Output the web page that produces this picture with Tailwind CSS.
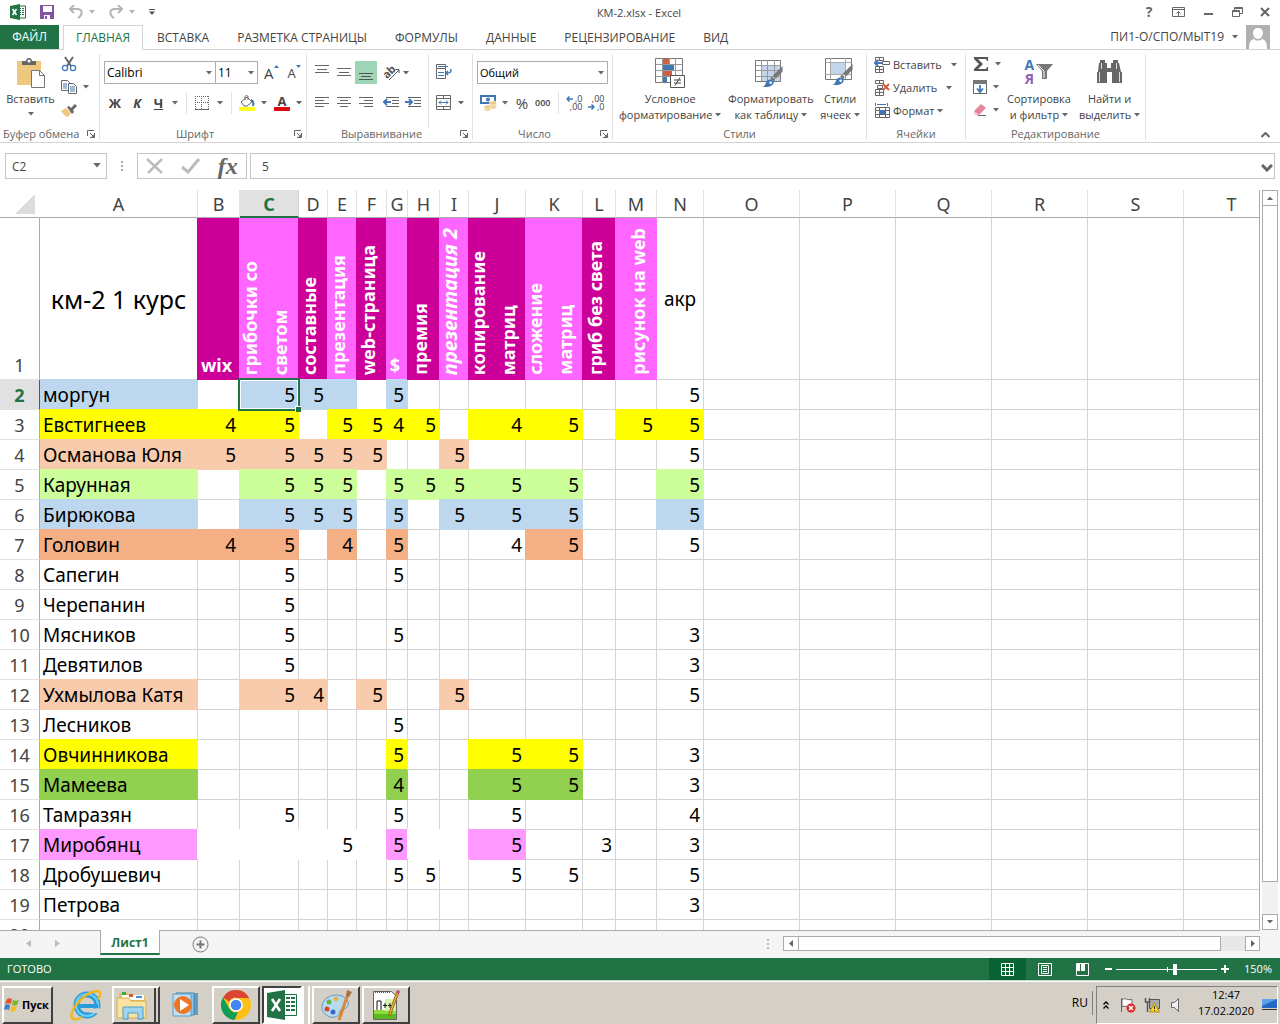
<!DOCTYPE html>
<html lang="ru">
<head>
  <meta charset="UTF-8" />
  <meta name="viewport" content="width=device-width, initial-scale=1" />
  <title>КМ-2.xlsx - Excel</title>
  <script src="https://cdn.jsdelivr.net/npm/@tailwindcss/browser@4"></script>
</head>

<body class="flex h-screen flex-col overflow-hidden bg-white font-['Open_Sans','Noto_Sans',sans-serif] text-[12px] leading-4 text-[#444]">

  <!-- Shared icons -->
  <svg class="hidden">
    <symbol id="caret" viewBox="0 0 6 4"><path d="M0 0h6L3 3.5z" fill="#666" /></symbol>
    <symbol id="launcher" viewBox="0 0 8 8"><path d="M.5 6V.5H7M3 3l3 3M7.5 3v4.5H3" fill="none" stroke="#666" /><path d="M7.5 4v3.5H4z" fill="#666" /></symbol>
    <symbol id="brush" viewBox="0 0 24 24">
      <path d="M22 1v6l-7 7-3-3z" fill="#777" />
      <path d="M11 12l3 3-2 2-3-3z" fill="#777" />
      <path d="M1 23c4-1 3-8 8-8 4 0 5 4 2 6-2 2-6 2-10 2z" fill="#3f78b5" />
      <path d="M8 18c1-1 3-1 3 1l-2 1z" fill="#fff" />
    </symbol>
  </svg>

  <!-- Title bar -->
  <header class="flex h-[25px] shrink-0 items-center px-2 pb-[2px]">
    <div class="flex flex-1 items-center">
      <svg class="ml-[2px] h-4 w-4" viewBox="0 0 16 16"><path d="M8 2h7.500v12H8z" fill="#fff" stroke="#217346" /><path d="M9 4h2v1H9zm3 0h2v1h-2zM9 6h2v1H9zm3 0h2v1h-2zM9 8h2v1H9zm3 0h2v1h-2zM9 10h2v1H9zm3 0h2v1h-2z" fill="#217346" /><path d="M0 2l10-2v16L0 14z" fill="#217346" /><path d="M2.500 5l4 6M6.500 5l-4 6" stroke="#fff" stroke-width="1.600" /></svg>
      <button class="ml-[14px]" aria-label="Сохранить"><svg class="h-[14px] w-[14px]" viewBox="0 0 14 14"><path d="M0 0h14v14H0z" fill="#8053a5" /><path d="M3 1h9v6H3z" fill="#fff" /><path d="M4 10h6v4H4z" fill="#fff" /><path d="M5 11h2v3H5z" fill="#8053a5" /></svg></button>
      <button class="ml-[15px] flex items-center gap-[6px]" aria-label="Отменить"><svg class="h-[14px] w-[14px]" viewBox="0 0 14 14" fill="none" stroke="#b5b5b5" stroke-width="2"><path d="M5 0L1 4l4 4M1 4h7c6 0 6 6 1 9" /></svg><svg class="h-1 w-[6px] opacity-50"><use href="#caret" /></svg></button>
      <button class="ml-[14px] flex items-center gap-[6px]" aria-label="Вернуть"><svg class="h-[14px] w-[14px]" viewBox="0 0 14 14" fill="none" stroke="#b5b5b5" stroke-width="2"><path d="M9 0l4 4-4 4M13 4H6C0 4 0 10 5 13" /></svg><svg class="h-1 w-[6px] opacity-50"><use href="#caret" /></svg></button>
      <button class="ml-[14px]" aria-label="Настройка панели"><svg class="h-[6px] w-[6px]" viewBox="0 0 6 6"><path d="M0 0h6v1H0zM0 2.500h6L3 6z" fill="#555" /></svg></button>
    </div>
    <h1 class="mt-[2px] text-[11px]">КМ-2.xlsx - Excel</h1>
    <div class="flex flex-1 items-center justify-end gap-[17px] pr-[2px] text-[#666]">
      <button class="w-3 text-[14px] font-bold" aria-label="Справка">?</button>
      <button aria-label="Параметры отображения ленты"><svg class="h-[10px] w-[13px]" viewBox="0 0 13 10" fill="none" stroke="#666"><path d="M.5.5h12v9H.5zM1 2.500h11M6.500 9V4.500M4.500 6.500l2-2 2 2" /></svg></button>
      <button aria-label="Свернуть"><svg class="h-[10px] w-[13px]" viewBox="0 0 13 10"><path d="M2 6h9v2H2z" fill="#666" /></svg></button>
      <button aria-label="Восстановить"><svg class="h-[10px] w-[11px]" viewBox="0 0 11 10" fill="none" stroke="#666"><path d="M.5 3.500h7v6h-7zM.5 4.500h7M2.500 3V.5h8v6H8M3 1.500h7" /></svg></button>
      <button aria-label="Закрыть"><svg class="h-[10px] w-[10px]" viewBox="0 0 10 10"><path d="M1 1l8 8M9 1L1 9" stroke="#666" stroke-width="2" /></svg></button>
    </div>
  </header>

  <!-- Ribbon tabs -->
  <nav class="flex h-[25px] shrink-0 border-b border-[#d4d4d4]">
    <a href="#" class="flex w-[59px] items-center justify-center bg-[#217346] text-white">ФАЙЛ</a>
    <a href="#" class="relative -mb-px ml-1 flex w-20 items-center justify-center border border-b-0 border-[#d4d4d4] bg-white text-[#217346]">ГЛАВНАЯ</a>
    <a href="#" class="flex items-center px-[14px] pt-px">ВСТАВКА</a>
    <a href="#" class="flex items-center px-[14px] pt-px">РАЗМЕТКА СТРАНИЦЫ</a>
    <a href="#" class="flex items-center px-[14px] pt-px">ФОРМУЛЫ</a>
    <a href="#" class="flex items-center px-[14px] pt-px">ДАННЫЕ</a>
    <a href="#" class="flex items-center px-[14px] pt-px">РЕЦЕНЗИРОВАНИЕ</a>
    <a href="#" class="flex items-center px-[14px] pt-px">ВИД</a>
    <button class="mr-[10px] ml-auto flex items-center gap-2">ПИ1-О/СПО/МЫТ19
      <svg class="h-1 w-[6px]"><use href="#caret" /></svg>
      <svg class="h-6 w-6" viewBox="0 0 24 24"><path d="M0 0h24v24H0z" fill="#b1b1b1" /><path d="M12 3c3 0 5 2 5 5s-2 6-5 6-5-3-5-6 2-5 5-5zM3 24c0-6 1-9 5-10 2 2 6 2 8 0 4 1 5 4 5 10z" fill="#fff" /></svg>
    </button>
  </nav>

  <!-- Ribbon -->
  <section class="flex h-[93px] shrink-0 border-b border-[#d4d4d4] pt-1 pb-[2px] text-[11px]">

    <div class="flex w-[100px] flex-col border-r border-[#e1e1e1]">
      <div class="flex h-[74px] shrink-0">
        <button class="flex w-[61px] flex-col items-center pt-1">
          <svg class="h-[30px] w-7" viewBox="0 0 28 30"><path d="M0 3h24v24H0z" fill="#edc87e" /><path d="M5 7V3h4c0-4 6-4 6 0h4v4z" fill="#666" /><circle cx="12" cy="3" r="1.500" fill="#fff" /><path d="M14.500 12.500h8l5 5v12h-13z" fill="#fff" stroke="#777" /><path d="M22.500 12.500v5h5" fill="none" stroke="#777" /></svg>
          <span class="mt-[3px]">Вставить</span>
          <svg class="mt-[5px] h-1 w-[6px]"><use href="#caret" /></svg>
        </button>
        <div class="flex flex-col gap-[7px] pt-[2px]">
          <button aria-label="Вырезать"><svg class="h-4 w-4" viewBox="0 0 16 16" fill="none"><path d="M4 1l6 9M12 1L6 10" stroke="#666" stroke-width="2" /><circle cx="4" cy="12" r="2.600" stroke="#3f78b5" stroke-width="1.300" /><circle cx="12" cy="12" r="2.600" stroke="#3f78b5" stroke-width="1.300" /></svg></button>
          <button class="flex items-center gap-[6px]" aria-label="Копировать"><svg class="h-4 w-4" viewBox="0 0 16 16" fill="#fff" stroke="#666"><path d="M.5 1.500h6l2 2v8h-8z" /><path d="M2 5h4M2 7h4M2 9h4" stroke="#3f78b5" /><path d="M7.500 4.500h5l3 3v7h-8z" /><path d="M9 8h5M9 10h5M9 12h5" stroke="#3f78b5" /></svg><svg class="h-1 w-[6px]"><use href="#caret" /></svg></button>
          <button aria-label="Формат по образцу"><svg class="h-4 w-4" viewBox="0 0 16 16"><path d="M0 9l5-3 5 5-3 4-3-1z" fill="#edc87e" /><path d="M6 5l2-1 2 2 4-4 2 2-4 4 1 2-2 2z" fill="#666" /></svg></button>
        </div>
      </div>
      <div class="flex items-center justify-between pr-1 pl-[3px] leading-3 text-[#666]">Буфер обмена<svg class="h-2 w-2"><use href="#launcher" /></svg></div>
    </div>

    <div class="flex w-[207px] flex-col border-r border-[#e1e1e1]">
      <div class="flex h-[74px] shrink-0 flex-col pl-1">
        <div class="flex items-center pt-[7px]">
          <div class="relative">
            <select aria-label="Шрифт" class="block h-[23px] w-[112px] appearance-none border border-[#ababab] bg-white px-[2px] text-[12px] text-black"><option>Calibri</option></select>
            <svg class="pointer-events-none absolute top-[10px] right-1 h-1 w-[6px]"><use href="#caret" /></svg>
          </div>
          <div class="relative -ml-px">
            <select aria-label="Размер шрифта" class="block h-[23px] w-[43px] appearance-none border border-[#ababab] bg-white px-[2px] text-[12px] text-black"><option>11</option></select>
            <svg class="pointer-events-none absolute top-[10px] right-1 h-1 w-[6px]"><use href="#caret" /></svg>
          </div>
          <button class="ml-[6px] flex items-start text-[15px]" aria-label="Увеличить размер шрифта">A<svg class="h-[3px] w-[5px]" viewBox="0 0 5 3"><path d="M0 3h5L2.500 0z" fill="#3f78b5" /></svg></button>
          <button class="ml-[9px] flex items-start text-[13px]" aria-label="Уменьшить размер шрифта">A<svg class="h-[3px] w-[5px]" viewBox="0 0 5 3"><path d="M0 0h5L2.500 3z" fill="#3f78b5" /></svg></button>
        </div>
        <div class="mt-2 flex items-center pl-1 text-[13px] font-bold">
          <button class="w-[14px]">Ж</button>
          <button class="ml-[9px] w-3 italic">К</button>
          <button class="ml-[10px] w-[11px] underline">Ч</button>
          <svg class="ml-[8px] h-1 w-[6px]"><use href="#caret" /></svg>
          <span class="ml-2 h-[22px] border-l border-[#e1e1e1]"></span>
          <button class="ml-2 flex items-center gap-2" aria-label="Границы"><svg class="h-[14px] w-[14px]" viewBox="0 0 14 14" fill="none" stroke="#666"><path d="M0 .5h14M0 6.500h14M.5 0v13M6.500 0v13M13.500 0v13" stroke-dasharray="1 1" /><path d="M0 13.500h14" /></svg><svg class="h-1 w-[6px]"><use href="#caret" /></svg></button>
          <span class="ml-2 h-[22px] border-l border-[#e1e1e1]"></span>
          <button class="ml-[7px] flex items-center gap-[6px]" aria-label="Цвет заливки"><svg class="h-4 w-4" viewBox="0 0 16 16"><path d="M2 7l6-5 5 5-5 4-3 0z" fill="#fff" stroke="#666" /><path d="M6 5V2c0-2 3-2 3 0v3" fill="none" stroke="#666" /><path d="M12 4c3 1 4 4 3 7h-2c1-3 0-4-1-5z" fill="#3f78b5" /><path d="M0 12h16v4H0z" fill="#ff2" /></svg><svg class="h-1 w-[6px]"><use href="#caret" /></svg></button>
          <button class="ml-[7px] flex items-center gap-[6px]" aria-label="Цвет текста"><span class="w-4 border-b-4 border-[#e00b12] text-center leading-3">А</span><svg class="h-1 w-[6px]"><use href="#caret" /></svg></button>
        </div>
      </div>
      <div class="flex items-center pr-1 leading-3 text-[#666]"><span class="flex-1 pr-1 text-center">Шрифт</span><svg class="h-2 w-2"><use href="#launcher" /></svg></div>
    </div>

    <div class="flex w-[166px] flex-col border-r border-[#e1e1e1]">
      <div class="flex h-[74px] shrink-0 justify-between pr-2 pl-1">
        <div class="flex flex-col gap-2 pt-[7px]">
          <div class="flex items-center">
            <button class="p-1" aria-label="По верхнему краю"><svg class="h-[15px] w-[14px]" viewBox="0 0 14 15" stroke="#666"><path d="M0 .5h14M2 4.500h10M0 7.500h14" /></svg></button>
            <button class="p-1" aria-label="По середине"><svg class="h-[15px] w-[14px]" viewBox="0 0 14 15" stroke="#666"><path d="M0 3.500h14M2 7.500h10M0 10.500h14" /></svg></button>
            <button class="bg-[#9fd5b7] p-1" aria-label="По нижнему краю"><svg class="h-[15px] w-[14px]" viewBox="0 0 14 15" stroke="#555"><path d="M0 8.500h14M2 11.500h10M0 14.500h14" /></svg></button>
            <button class="flex items-center gap-1 pl-[6px]" aria-label="Ориентация"><svg class="h-4 w-4 overflow-visible" viewBox="0 0 16 16"><text x="0" y="11" transform="rotate(-45 6 8)" font-size="11" font-weight="bold" fill="#555">ab</text><path d="M6 15L16 5M12.500 4.500h3.500v3.500" fill="none" stroke="#555" /></svg><svg class="h-1 w-[6px]"><use href="#caret" /></svg></button>
          </div>
          <div class="flex items-center">
            <button class="p-1" aria-label="По левому краю"><svg class="h-[12px] w-[14px]" viewBox="0 0 14 12" stroke="#666"><path d="M0 1.500h14M0 4.500h9M0 7.500h14M0 10.500h9" /></svg></button>
            <button class="p-1" aria-label="По центру"><svg class="h-[12px] w-[14px]" viewBox="0 0 14 12" stroke="#666"><path d="M0 1.500h14M3 4.500h8M0 7.500h14M3 10.500h8" /></svg></button>
            <button class="p-1" aria-label="По правому краю"><svg class="h-[12px] w-[14px]" viewBox="0 0 14 12" stroke="#666"><path d="M0 1.500h14M5 4.500h9M0 7.500h14M5 10.500h9" /></svg></button>
            <button class="pl-[6px]" aria-label="Уменьшить отступ"><svg class="h-[12px] w-4" viewBox="0 0 16 12" stroke="#666"><path d="M3 1.500h13M9 4.500h7M9 7.500h7M3 10.500h13" /><path d="M8 6H1M4 3L1 6l3 3" fill="none" stroke="#3f78b5" stroke-width="2" /></svg></button>
            <button class="pl-[6px]" aria-label="Увеличить отступ"><svg class="h-[12px] w-4" viewBox="0 0 16 12" stroke="#666"><path d="M3 1.500h13M9 4.500h7M9 7.500h7M3 10.500h13" /><path d="M0 6h7M4 3l3 3-3 3" fill="none" stroke="#3f78b5" stroke-width="2" /></svg></button>
          </div>
        </div>
        <div class="flex flex-col gap-[15px] border-l border-[#e1e1e1] pt-[10px] pl-[7px]">
          <button aria-label="Перенести текст"><svg class="h-4 w-4" viewBox="0 0 16 16" fill="none" stroke="#666"><path d="M.5.500h9v4h-9zM.5 4.500h9v10h-9z" /><path d="M2 2.500h10M2 8.500h6M2 11.500h6" stroke="#3f78b5" /><path d="M15 5c0 4-1 4-5 4M12 7l-2 2 2 2" stroke="#3f78b5" stroke-width="1.500" /></svg></button>
          <button class="flex items-center gap-[7px]" aria-label="Объединить"><svg class="h-[15px] w-[15px]" viewBox="0 0 15 15" fill="none" stroke="#666"><path d="M.5.500h14v14H.5zM0 3.500h15M0 11.500h15M7.500 0v3M7.500 12v3" /><path d="M3 7.500h9M5 5.500l-2 2 2 2M10 5.500l2 2-2 2" stroke="#3f78b5" /></svg><svg class="h-1 w-[6px]"><use href="#caret" /></svg></button>
        </div>
      </div>
      <div class="flex items-center pr-1 leading-3 text-[#666]"><span class="flex-1 pr-1 text-center">Выравнивание</span><svg class="h-2 w-2"><use href="#launcher" /></svg></div>
    </div>

    <div class="flex w-[140px] flex-col border-r border-[#e1e1e1]">
      <div class="flex h-[74px] shrink-0 flex-col pt-[7px] pl-1">
        <div class="relative w-[131px]">
          <select aria-label="Числовой формат" class="block h-[23px] w-full appearance-none border border-[#ababab] bg-white px-[2px] text-black"><option>Общий</option></select>
          <svg class="pointer-events-none absolute top-[10px] right-1 h-1 w-[6px]"><use href="#caret" /></svg>
        </div>
        <div class="mt-2 flex items-center pl-[3px]">
          <button class="flex items-center gap-[5px]" aria-label="Финансовый формат"><svg class="h-4 w-[17px]" viewBox="0 0 17 16"><path d="M0 0h16v9H0z" fill="#3f78b5" /><path d="M2 2h12v5H2z" fill="#fff" /><circle cx="8" cy="4.500" r="2" fill="#3f78b5" /><g fill="#edc87e" stroke="#fff" stroke-width=".6"><ellipse cx="13" cy="12" rx="3.500" ry="2" /><ellipse cx="13" cy="10" rx="3.500" ry="2" /><ellipse cx="13" cy="8" rx="3.500" ry="2" /><ellipse cx="7.500" cy="14" rx="3.500" ry="2" /><ellipse cx="7.500" cy="12" rx="3.500" ry="2" /></g></svg><svg class="h-1 w-[6px]"><use href="#caret" /></svg></button>
          <button class="ml-[7px] w-[14px] text-[15px]">%</button>
          <button class="ml-[6px] text-[9px] font-semibold">000</button>
          <span class="ml-2 h-[22px] border-l border-[#e1e1e1]"></span>
          <button class="relative ml-[7px] flex w-4 flex-col items-end text-[9px] leading-[8px]" aria-label="Увеличить разрядность"><svg class="absolute top-[1px] left-0 h-[6px] w-[7px]" viewBox="0 0 7 6"><path d="M7 3H1M3.500 0.500L1 3l2.500 2.500" fill="none" stroke="#3f78b5" stroke-width="1.500" /></svg><span>,0</span><span>,00</span></button>
          <button class="relative ml-[6px] flex w-4 flex-col items-end text-[9px] leading-[8px]" aria-label="Уменьшить разрядность"><svg class="absolute bottom-[1px] left-0 h-[6px] w-[7px]" viewBox="0 0 7 6"><path d="M0 3h6M3.500 0.500L6 3 3.500 5.500" fill="none" stroke="#3f78b5" stroke-width="1.500" /></svg><span>,00</span><span>,0</span></button>
        </div>
      </div>
      <div class="flex items-center pr-1 leading-3 text-[#666]"><span class="flex-1 pr-1 text-center">Число</span><svg class="h-2 w-2"><use href="#launcher" /></svg></div>
    </div>

    <div class="flex w-[254px] flex-col border-r border-[#e1e1e1]">
      <div class="flex h-[74px] shrink-0 justify-between px-[6px] pt-[2px]">
        <button class="flex flex-col items-center whitespace-nowrap">
          <svg class="mb-[3px] h-8 w-[31px]" viewBox="0 0 31 32"><path d="M.5 2.500h27v24H.5z" fill="#fff" stroke="#777" /><path d="M8 3h6v5H8zM8 15h9v5H8z" fill="#cf5f43" /><path d="M8 9h11v5H8zM8 21h4v5H8z" fill="#3f78b5" /><path d="M.5 8.500h27M.5 14.500h27M.5 20.500h27M7.500 2v25M14.500 2v6M20.500 2v25" fill="none" stroke="#999" /><path d="M15.500 19.500h14v12h-14z" fill="#fff" stroke="#555" /><path d="M19 24h7M19 27h7M25 21.500l-5 8" stroke="#444" /></svg>
          <span>Условное</span>
          <span class="flex items-center gap-[3px]">форматирование<svg class="h-1 w-[6px]"><use href="#caret" /></svg></span>
        </button>
        <button class="flex flex-col items-center whitespace-nowrap">
          <svg class="mb-[3px] h-8 w-[31px]" viewBox="0 0 31 32"><path d="M.5 4.500h25v21H.5z" fill="#fff" stroke="#777" /><path d="M7 10h18v15H7z" fill="#c3d5ea" /><path d="M.5 9.500h25M.5 14.500h25M.5 20.500h25M6.500 4v21M12.500 4v21M19.500 4v21" stroke="#999" /><use href="#brush" x="6" y="9" width="24" height="23" /></svg>
          <span>Форматировать</span>
          <span class="flex items-center gap-[3px]">как таблицу<svg class="h-1 w-[6px]"><use href="#caret" /></svg></span>
        </button>
        <button class="flex flex-col items-center whitespace-nowrap">
          <svg class="mb-[3px] h-8 w-[31px]" viewBox="0 0 31 32"><path d="M.5 2.500h26v21H.5z" fill="#fff" stroke="#777" /><path d="M.5 6.500h26M.5 18.500h26M5.500 2v21M20.500 2v21" stroke="#aaa" /><path d="M6 7h14v11H6z" fill="#c3d5ea" /><use href="#brush" x="6" y="7" width="24" height="23" /></svg>
          <span>Стили</span>
          <span class="flex items-center gap-[3px]">ячеек<svg class="h-1 w-[6px]"><use href="#caret" /></svg></span>
        </button>
      </div>
      <div class="text-center leading-3 text-[#666]">Стили</div>
    </div>

    <div class="flex w-[99px] flex-col border-r border-[#e1e1e1]">
      <div class="flex h-[74px] shrink-0 flex-col gap-[7px] pt-[3px] pl-[7px]">
        <button class="flex items-center gap-[3px]"><svg class="h-4 w-4" viewBox="0 0 16 16" fill="none" stroke="#666"><path d="M1.500.500h8v3h-8zM5.500 0v4M1.500 9.500h8v6h-8zM5.500 9v6M1.500 12.500h8M8.500 4.500h7v3h-7z" /><path d="M8 6H1M4 3L1 6l3 3" stroke="#3f78b5" stroke-width="2" /></svg>Вставить<svg class="ml-[6px] h-1 w-[6px]"><use href="#caret" /></svg></button>
        <button class="flex items-center gap-[3px]"><svg class="h-4 w-4" viewBox="0 0 16 16" fill="none" stroke="#666"><path d="M1.500.500h8v3h-8zM5.500 0v4M1.500 9.500h8v6h-8zM5.500 9v6M1.500 12.500h8M3.500 5.500h5v3h-5z" /><path d="M9 4l6 6M15 4l-6 6" stroke="#d9553c" stroke-width="1.800" /></svg>Удалить<svg class="ml-[6px] h-1 w-[6px]"><use href="#caret" /></svg></button>
        <button class="flex items-center gap-[3px]"><svg class="h-4 w-4" viewBox="0 0 16 16" fill="none" stroke="#666"><path d="M1.500 0v3M13.500 0v3M3 1.500h9" stroke="#3f78b5" /><path d="M1.500 4.500h14v10h-14zM5.500 4v11M11.500 4v11M1 7.500h14M1 11.500h14" /><path d="M5 7h6v4H5z" fill="#3f78b5" stroke="none" /></svg>Формат<svg class="h-1 w-[6px]"><use href="#caret" /></svg></button>
      </div>
      <div class="text-center leading-3 text-[#666]">Ячейки</div>
    </div>

    <div class="flex w-[180px] flex-col border-r border-[#e1e1e1]">
      <div class="flex h-[74px] shrink-0 pt-[2px]">
        <div class="flex w-[41px] flex-col gap-[7px] pl-[7px]">
          <button class="flex items-center gap-[6px]" aria-label="Сумма"><svg class="h-4 w-4" viewBox="0 0 16 16"><path d="M1 1h14v4h-1l-1-2H5l5 5-5 5h8l1-2h1v4H1v-2l5-5-5-5z" fill="#555" /></svg><svg class="h-1 w-[6px]"><use href="#caret" /></svg></button>
          <button class="flex items-center gap-[6px]" aria-label="Заполнить"><svg class="h-4 w-[14px]" viewBox="0 0 14 16"><path d="M.5 1.500h13v13H.5z" fill="#fff" stroke="#666" /><path d="M0 1h14v4H0z" fill="#777" /><path d="M7 6v7M4 9.500l3 3.500 3-3.500" fill="none" stroke="#3f78b5" stroke-width="1.800" /></svg><svg class="h-1 w-[6px]"><use href="#caret" /></svg></button>
          <button class="flex items-center gap-[6px]" aria-label="Очистить"><svg class="h-4 w-[14px]" viewBox="0 0 14 16"><path d="M1 9l7-7 5 4-7 7z" fill="#e6849a" /><path d="M1 9l5 4-2 1-3-2z" fill="#f3c3cd" /><path d="M5 13.500h8" stroke="#666" /></svg><svg class="h-1 w-[6px]"><use href="#caret" /></svg></button>
        </div>
        <button class="flex flex-col items-center whitespace-nowrap">
          <span class="mb-[3px] flex h-8 items-center gap-[2px]">
            <span class="flex flex-col text-[14px] leading-[14px] font-bold"><span class="text-[#3f78b5]">А</span><span class="text-[#8f5fb5]">Я</span></span>
            <svg class="h-4 w-[17px]" viewBox="0 0 17 16"><path d="M0 0h17l-6 7v8H6V7z" fill="#777" /><path d="M2 1l6 6v7" fill="none" stroke="#fff" /></svg>
          </span>
          <span>Сортировка</span>
          <span class="flex items-center gap-[3px]">и фильтр<svg class="h-1 w-[6px]"><use href="#caret" /></svg></span>
        </button>
        <button class="ml-2 flex flex-col items-center whitespace-nowrap">
          <svg class="mb-[3px] h-8 w-[31px]" viewBox="0 0 31 32"><path d="M6 4h5v3h2v5h4V7h2V4h5v3h1l2 9h1v11H18V16h-5v11H3V16h1l1-9h1z" fill="#666" /><path d="M5.500 16v10M25.500 16v10M7.500 7v6M22.500 7v6" stroke="#ddd" /></svg>
          <span>Найти и</span>
          <span class="flex items-center gap-[3px]">выделить<svg class="h-1 w-[6px]"><use href="#caret" /></svg></span>
        </button>
      </div>
      <div class="text-center leading-3 text-[#666]">Редактирование</div>
    </div>

    <button class="mt-auto mr-[10px] mb-[2px] ml-auto" aria-label="Свернуть ленту"><svg class="h-[6px] w-[9px]" viewBox="0 0 9 6"><path d="M.5 5l4-4 4 4" fill="none" stroke="#666" stroke-width="2" /></svg></button>
  </section>

  <!-- Formula bar -->
  <section class="flex shrink-0 px-[5px] pt-[10px] pb-[11px]">
    <div class="relative">
      <input aria-label="Имя" value="C2" class="block h-[26px] w-[102px] border border-[#c6c6c6] px-[6px]" />
      <svg class="pointer-events-none absolute top-[10px] right-[6px] h-[5px] w-2"><use href="#caret" /></svg>
    </div>
    <svg class="mx-[13px] mt-2 h-[11px] w-1" viewBox="0 0 4 11"><path d="M1 0h2v2H1zM1 4h2v2H1zM1 8h2v2H1z" fill="#aaa" /></svg>
    <div class="flex h-[26px] w-[110px] items-center justify-around border border-[#c6c6c6]">
      <button aria-label="Отмена"><svg class="h-4 w-[18px]" viewBox="0 0 18 16"><path d="M1 1l15 14M16 1L2 15" stroke="#bcbcbc" stroke-width="2.500" /></svg></button>
      <button aria-label="Ввод"><svg class="h-4 w-5" viewBox="0 0 20 16"><path d="M1 9l6 5L18 1" fill="none" stroke="#bcbcbc" stroke-width="3" /></svg></button>
      <button class="font-['Liberation_Serif',serif] text-[24px] leading-5 font-bold text-[#666] italic">fx</button>
    </div>
    <div class="relative ml-[3px] flex-1">
      <input aria-label="Строка формул" value="5" class="block h-[26px] w-full border border-[#c6c6c6] px-[11px]" />
      <svg class="absolute top-[11px] right-[2px] h-[8px] w-3" viewBox="0 0 12 8"><path d="M1 1l5 5 5-5" fill="none" stroke="#666" stroke-width="3" /></svg>
    </div>
  </section>

  <!-- Sheet -->
  <main class="flex min-h-0 flex-1">
    <div class="min-w-0 flex-1 overflow-hidden border-r border-[#ababab]">
      <table class="w-full min-w-[1280px] table-fixed border-separate border-spacing-0 font-['Noto_Sans',sans-serif] text-[18px] leading-[27px] text-black [&_tbody_td]:pt-[2px] [&_tbody_th]:pt-[2px]">
        <colgroup>
          <col class="w-10" /><col class="w-[158px]" /><col class="w-[42px]" /><col class="w-[59px]" /><col class="w-[29px]" /><col class="w-[29px]" /><col class="w-[30px]" /><col class="w-[21px]" /><col class="w-8" /><col class="w-[29px]" /><col class="w-[57px]" /><col class="w-[57px]" /><col class="w-[33px]" /><col class="w-[41px]" /><col class="w-[47px]" /><col class="w-24" /><col class="w-24" /><col class="w-24" /><col class="w-24" /><col class="w-24" /><col />
        </colgroup>
        <thead><tr id="letters"></tr></thead>
        <tbody id="rows"></tbody>
      </table>
    </div>
    <div class="flex w-5 flex-col px-[2px]">
      <button class="flex h-4 w-4 shrink-0 items-center justify-center border border-[#ababab]" aria-label="Вверх"><svg class="h-1 w-[6px] rotate-180"><use href="#caret" /></svg></button>
      <div class="h-[676px] w-4 border border-t-0 border-[#ababab]"></div>
      <div class="w-4 flex-1 bg-[#f1f1f1]"></div>
      <button class="flex h-4 w-4 shrink-0 items-center justify-center border border-[#ababab]" aria-label="Вниз"><svg class="h-1 w-[6px]"><use href="#caret" /></svg></button>
    </div>
  </main>

  <!-- Sheet tabs -->
  <section class="flex h-7 shrink-0 bg-[#f5f5f5] pr-5">
    <div class="flex flex-1 border-t border-[#ababab]">
      <button class="ml-[26px] flex items-center pb-[2px]" aria-label="Предыдущий лист"><svg class="h-[7px] w-[5px]" viewBox="0 0 5 7"><path d="M5 0v7L0 3.500z" fill="#bbb" /></svg></button>
      <button class="ml-6 flex items-center pb-[2px]" aria-label="Следующий лист"><svg class="h-[7px] w-[5px]" viewBox="0 0 5 7"><path d="M0 0v7l5-3.500z" fill="#bbb" /></svg></button>
      <a href="#" class="-mt-px ml-10 flex h-[25px] w-[60px] items-center justify-center border-x border-b-2 border-x-[#ababab] border-b-[#217346] bg-white pt-[3px] font-bold text-[#217346]">Лист1</a>
      <button class="ml-8 flex items-center pb-px" aria-label="Новый лист"><svg class="h-[17px] w-[17px]" viewBox="0 0 17 17" fill="none" stroke="#777"><circle cx="8.500" cy="8.500" r="7.500" /><path d="M8.500 4.500v8M4.500 8.500h8" stroke-width="2" /></svg></button>
      <svg class="mt-2 mr-[13px] ml-auto h-[11px] w-1" viewBox="0 0 4 11"><path d="M1 0h2v2H1zM1 4h2v2H1zM1 8h2v2H1z" fill="#bbb" /></svg>
      <div class="mt-[5px] flex h-[15px] w-[477px]">
        <button class="flex w-4 items-center justify-center border border-[#ababab] bg-white" aria-label="Влево"><svg class="h-[7px] w-1" viewBox="0 0 4 7"><path d="M4 0v7L0 3.500z" fill="#666" /></svg></button>
        <div class="flex-1 border border-l-0 border-[#ababab] bg-white"></div>
        <div class="w-6 bg-[#e8e8e8]"></div>
        <button class="flex w-[15px] items-center justify-center border border-[#ababab] bg-white" aria-label="Вправо"><svg class="h-[7px] w-1" viewBox="0 0 4 7"><path d="M0 0v7l4-3.500z" fill="#666" /></svg></button>
      </div>
    </div>
  </section>

  <!-- Status bar -->
  <footer class="flex h-[22px] shrink-0 items-center bg-[#217346] pr-2 pl-[7px] text-[11px] text-white">
    <span>ГОТОВО</span>
    <button class="ml-auto flex h-full w-[37px] items-center justify-center bg-[#0a6332]" aria-label="Обычный"><svg class="h-[13px] w-[13px]" viewBox="0 0 13 13" fill="none" stroke="#fff"><path d="M.5.500h12v12H.5zM.5 4.500h12M.5 8.500h12M4.500.500v12M8.500.500v12" /></svg></button>
    <button class="ml-3" aria-label="Разметка страницы"><svg class="h-[13px] w-[14px]" viewBox="0 0 14 13" fill="none" stroke="#fff"><path d="M.5.500h13v12H.5zM3.500 2.500h7v8h-7zM5 4.500h4M5 6.500h4M5 8.500h4" /></svg></button>
    <button class="ml-6" aria-label="Страничный режим"><svg class="h-[13px] w-[13px]" viewBox="0 0 13 13"><path d="M.5.500h12v12H.5z" fill="none" stroke="#fff" /><path d="M1 1h3v7H1zM5 1h4v7H5z" fill="#fff" /></svg></button>
    <button class="ml-4" aria-label="Уменьшить"><svg class="h-2 w-[7px]" viewBox="0 0 7 8"><path d="M0 3h7v2H0z" fill="#fff" /></svg></button>
    <div class="relative mx-1 flex w-[101px] items-center">
      <input type="range" aria-label="Масштаб" min="0" max="100" value="59" class="h-[11px] w-full appearance-none bg-transparent [&::-webkit-slider-runnable-track]:h-px [&::-webkit-slider-runnable-track]:bg-white [&::-webkit-slider-thumb]:-mt-[5px] [&::-webkit-slider-thumb]:h-[11px] [&::-webkit-slider-thumb]:w-1 [&::-webkit-slider-thumb]:appearance-none [&::-webkit-slider-thumb]:bg-white" />
      <span class="absolute left-1/2 h-[5px] border-l border-white"></span>
    </div>
    <button aria-label="Увеличить"><svg class="h-2 w-2" viewBox="0 0 8 8"><path d="M0 3h8v2H0zM3 0h2v8H3z" fill="#fff" /></svg></button>
    <span class="ml-[15px]">150%</span>
  </footer>

  <!-- Taskbar -->
  <section class="flex h-11 shrink-0 items-center border-t border-[#c5d8cb] bg-[#d4d0c8] px-[2px] shadow-[inset_0_1px_0_#fff]">
    <button class="mt-1 flex h-[38px] w-[51px] items-center gap-[2px] border-2 border-t-white border-r-[#404040] border-b-[#404040] border-l-white text-[11px] font-bold text-black">
      <svg class="h-4 w-4 shrink-0" viewBox="0 0 16 16"><path d="M3 2c2-1 3-1 5 0L7 7C5 6 3 6 1 7z" fill="#e2532d" /><path d="M9 3c2 1 4 1 6 0l-2 5c-2 1-3 1-5 0z" fill="#7db72f" /><path d="M1 8c2-1 3-1 5 0l-1 5c-2-1-3-1-5 0z" fill="#3b7fd0" /><path d="M7 9c2 1 4 1 6 0l-2 5c-2 1-3 1-5 0z" fill="#f5bd28" /></svg>Пуск
    </button>
    <button class="mt-1 ml-[17px]" aria-label="Internet Explorer"><svg class="h-8 w-8" viewBox="0 0 32 32" fill="none"><circle cx="17" cy="16" r="10.500" stroke="#2a9cdc" stroke-width="6" /><circle cx="17" cy="16" r="11" stroke="#6cd0f5" stroke-width="2" /><path d="M8 17h20" stroke="#2a9cdc" stroke-width="4" /><path d="M19 19.500h12v5l-12-1z" fill="#d4d0c8" /><path d="M3 30C-4 24 14 3 27 2c4 0 4 4 1 8M3 30c3 1 6 0 9-2" stroke="#f0b81c" stroke-width="2.400" /></svg></button>
    <button class="mt-1 ml-[10px] flex h-[38px] w-12 items-center border-2 border-t-white border-r-[#404040] border-b-[#404040] border-l-white" aria-label="Проводник">
      <svg class="h-8 w-9" viewBox="0 0 36 32"><path d="M5 4h9l2 3h15v7H5z" fill="#e6bf5b" /><path d="M8 6h22v5H8z" fill="#fff" /><path d="M8 3h4v3H8z" fill="#38a84a" /><path d="M15 5h4v3h-4z" fill="#d65534" /><path d="M22 7h6v2h-6z" fill="#4794cf" /><path d="M3 9h12l2 3h15v17H3z" fill="#f8e3a0" stroke="#d5ad4e" /><path d="M9 18h20v12h-5v-6H14v6H9z" fill="#9fd4ee" stroke="#4c9dc7" /></svg>
      <span class="ml-1 h-full border-l-2 border-[#404040]"></span>
    </button>
    <button class="mt-1 ml-3" aria-label="Windows Media"><svg class="h-[27px] w-[30px]" viewBox="0 0 30 27"><path d="M8 2h18v22H8z" fill="#5c9cc6" /><path d="M4 2h18v22H4z" fill="#8cc4e6" stroke="#4483ad" /><path d="M1 3h18v22H1z" fill="#bfe0f4" stroke="#5c9cc6" /><circle cx="11" cy="14" r="9" fill="#ee7623" /><path d="M8 8l9 6-9 6z" fill="#fff" /></svg></button>
    <button class="mt-1 ml-[10px] flex h-[38px] w-12 items-center justify-center border-2 border-t-white border-r-[#404040] border-b-[#404040] border-l-white" aria-label="Chrome">
      <svg class="h-[30px] w-[30px]" viewBox="0 0 30 30"><circle cx="15" cy="15" r="15" fill="#fbc116" /><path d="M2 7.500A15 15 0 0128 7.500H15a7.500 7.500 0 00-7 4z" fill="#dc4437" /><path d="M2 7.500l6.500 11.300A7.500 7.500 0 0017 22l-3.500 8A15 15 0 012 7.500z" fill="#109d58" /><path d="M15 7.500h13" stroke="#dc4437" /><circle cx="15" cy="15" r="6.800" fill="#fff" /><circle cx="15" cy="15" r="5.300" fill="#4285f4" /></svg>
    </button>
    <button class="mt-1 ml-[2px] flex h-[38px] w-10 items-center justify-center border-2 border-t-[#404040] border-r-white border-b-white border-l-[#404040] bg-white" aria-label="Excel">
      <svg class="h-[30px] w-[30px]" viewBox="0 0 30 30"><path d="M16 4.500h13.500v21H16z" fill="#fff" stroke="#217346" /><path d="M19 7h4v2h-4zm5 0h4v2h-4zm-5 4h4v2h-4zm5 0h4v2h-4zm-5 4h4v2h-4zm5 0h4v2h-4zm-5 4h4v2h-4zm5 0h4v2h-4z" fill="#217346" /><path d="M0 3l18-3v30L0 27z" fill="#217346" /><path d="M5 9l8 12M13 9L5 21" stroke="#fff" stroke-width="2.600" /></svg>
    </button>
    <span class="mt-1 h-[38px] w-2 border-x-2 border-x-white"></span>
    <button class="mt-1 ml-[2px] flex h-[38px] w-12 items-center justify-center border-2 border-t-white border-r-[#404040] border-b-[#404040] border-l-white" aria-label="Paint">
      <svg class="h-8 w-8" viewBox="0 0 32 32"><path d="M2 17C3 8 14 4 22 7c7 3 8 9 4 12-3 2-5 0-6 3 0 5-5 7-10 6-5-2-9-6-8-11z" fill="#b8d9ee" stroke="#6899bd" /><circle cx="7" cy="20" r="2.500" fill="#d64437" /><circle cx="9" cy="13" r="2.500" fill="#5fb548" /><circle cx="16" cy="10" r="2.300" fill="#e8b43a" /><circle cx="13" cy="23" r="2.500" fill="#3568c4" /><path d="M28 5L19 31" stroke="#d98635" stroke-width="3" /><path d="M26 7l1-6 5 2-3 5z" fill="#a57246" /></svg>
    </button>
    <button class="mt-1 ml-[2px] flex h-[38px] w-12 items-center justify-center border-2 border-t-white border-r-[#404040] border-b-[#404040] border-l-white" aria-label="Notepad++">
      <svg class="h-8 w-8" viewBox="0 0 32 32"><path d="M3.500 2.500h18l5 5v23h-23z" fill="#fff" stroke="#666" /><path d="M4 21h22v9H4z" fill="#8fdc3c" /><path d="M15 10h11v12H15z" fill="#d5f2a8" /><path d="M4 25h22v5H4z" fill="#5cba20" /><path d="M5 3h16" stroke="#555" stroke-width="2" stroke-dasharray="1 1" /><path d="M7 21v-9h4v9M13 16.500h4M15 14v5M18 16.500h4M20 14v5" fill="none" stroke="#111" /><path d="M29 3l-8 22-2 2v-3l8-22z" fill="#f5b83a" stroke="#99661f" /><path d="M27 1l3 1-1 3-3-1z" fill="#c2546b" /></svg>
    </button>

    <span class="ml-auto text-black">RU</span>
    <span class="ml-1 h-6 border-l border-[#808080]"></span>
    <div class="mt-1 ml-[3px] flex h-[38px] items-center border border-t-[#808080] border-r-white border-b-white border-l-[#808080] pl-[6px] text-black">
      <svg class="h-2 w-[6px]" viewBox="0 0 6 8" fill="none" stroke="#000"><path d="M.5 3.500L3 1l2.500 2.500M.5 7.500L3 5l2.500 2.500" stroke-width="1.300" /></svg>
      <svg class="ml-[11px] h-4 w-4" viewBox="0 0 16 16"><path d="M1.500 1v14M2 2.500c4-2 5 1 10 0v7c-4 1-6-1-10 0z" fill="#fff" stroke="#666" /><circle cx="11" cy="11" r="4.500" fill="#d8292b" /><path d="M9 9l4 4M13 9l-4 4" stroke="#fff" stroke-width="1.500" /></svg>
      <svg class="ml-[8px] h-4 w-4" viewBox="0 0 16 16"><path d="M5.500 2.500h10v9h-10z" fill="#aaa" stroke="#555" /><path d="M1.500 1v4h4V1M3.500 5v10" fill="none" stroke="#555" stroke-width="1.500" /><path d="M10.500 6l5 9h-10z" fill="#fbd82a" stroke="#b08f10" /><path d="M10 9h1v3h-1zM10 13h1v1h-1z" fill="#222" /></svg>
      <svg class="ml-[11px] h-4 w-[10px]" viewBox="0 0 10 16"><path d="M.5 5.500h3l4-4v13l-4-4h-3z" fill="#eee" stroke="#666" /></svg>
      <div class="ml-[17px] pb-1 text-center text-[11px]">12:47<br />17.02.2020</div>
      <svg class="ml-[8px] h-4 w-[15px]" viewBox="0 0 15 16"><path d="M0 2h15v9H0z" fill="#2567c4" /><path d="M0 2h15L0 9z" fill="#5ba2ea" /><path d="M0 12h15v1H0z" fill="#333" /></svg>
    </div>
  </section>

  <script>
    // fill classes; the shadow hides the grid line of the cell above and to the left
    const fills = {
      b: 'bg-[#bdd7ee] border-[#bdd7ee] shadow-[-1px_-1px_0_#bdd7ee]',
      y: 'bg-[#ffff00] border-[#ffff00] shadow-[-1px_-1px_0_#ffff00]',
      o: 'bg-[#f8cbad] border-[#f8cbad] shadow-[-1px_-1px_0_#f8cbad]',
      g: 'bg-[#ccff99] border-[#ccff99] shadow-[-1px_-1px_0_#ccff99]',
      d: 'bg-[#f4b084] border-[#f4b084] shadow-[-1px_-1px_0_#f4b084]',
      G: 'bg-[#92d050] border-[#92d050] shadow-[-1px_-1px_0_#92d050]',
      p: 'bg-[#ff99ff] border-[#ff99ff] shadow-[-1px_-1px_0_#ff99ff]',
      w: 'bg-white border-white shadow-[-1px_-1px_0_#ffffff]',
      m: 'bg-[#cc0099] border-[#cc0099] shadow-[-1px_0_0_#cc0099]',
      k: 'bg-[#ff66ff] border-[#ff66ff] shadow-[-1px_0_0_#ff66ff]',
      '.': 'border-[#d4d4d4]'
    };

    // name, fills for A..N, grades for B..N
    const rows = [
      ['моргун', 'b.bbb.b.......', '.55..5......5'],
      ['Евстигнеев', 'yyy.yyyy.yy.yy', '45.5545.45.55'],
      ['Османова Юля', 'oooooo..o.....', '55555..5....5'],
      ['Карунная', 'g.ggg.ggggg..g', '.555.55555..5'],
      ['Бирюкова', 'b.bbb.b.bbb..b', '.555.5.555..5'],
      ['Головин', 'ddd.d.d...d...', '45.4.5..45..5'],
      ['Сапегин', '..............', '.5...5.......'],
      ['Черепанин', '..............', '.5...........'],
      ['Мясников', '..............', '.5...5......3'],
      ['Девятилов', '..............', '.5..........3'],
      ['Ухмылова Катя', 'o.oo.o..o.....', '.54.5..5....5'],
      ['Лесников', '..............', '.....5.......'],
      ['Овчинникова', 'y.....y..yy...', '.....5..55..3'],
      ['Мамеева', 'G.....G..GG...', '.....4..55..3'],
      ['Тамразян', '..............', '.5...5..5...4'],
      ['Миробянц', 'pwwwwwpwwp....', '...5.5..5.3.3'],
      ['Дробушевич', '..............', '.....55.55..5'],
      ['Петрова', '..............', '............3'],
      ['', '..............', '.............']
    ];

    const titles = ['wix', 'грибочки со<br>светом', 'составные', 'презентация', 'web-страница', '$', 'премия', '<i class="text-[20px]">презентация 2</i>', 'копирование<br>матриц', 'сложение<br>матриц', 'гриб без света', 'рисунок на web'];
    const titleFills = 'mkmkmkmkmkmk';

    // column letters
    let head = '<th class="relative z-1 h-7 border-r border-b border-r-transparent border-b-[#ababab] p-0"><svg class="ml-auto mr-1 h-5 w-5" viewBox="0 0 20 20"><path d="M20 0v20H0z" fill="#dcdcdc" /></svg></th>';
    for (const c of 'ABCDEFGHIJKLMNOPQRST') {
      head += c === 'C'
        ? '<th class="h-7 border-r border-b-2 border-r-[#d4d4d4] border-b-[#217346] bg-[#e1e1e1] p-0 pt-[2px] leading-[24px] font-bold text-[#217346]">C</th>'
        : '<th class="h-7 border-r border-b border-r-[#e1e1e1] border-b-[#ababab] p-0 pt-[2px] leading-[25px] font-normal text-[#444]">' + c + '</th>';
    }
    document.getElementById('letters').innerHTML = head;

    const empty = '<td class="border-r border-b border-[#d4d4d4] p-0"></td>'.repeat(6);

    // heading row
    let body = '<tr><th class="relative z-1 h-[162px] border-r border-b border-r-[#ababab] border-b-[#e1e1e1] bg-white p-0 align-bottom font-normal text-[#444]">1</th>' +
      '<td class="border-r border-b border-[#d4d4d4] p-0 text-center text-[25px]">км-2 1 курс</td>';
    titles.forEach((t, i) => {
      const upright = t === 'wix' || t === '$';
      const pad = t === 'рисунок на web' ? 'pl-1' : 'pr-2';
      body += '<td class="border-r border-b p-0 align-bottom font-bold text-white ' + fills[titleFills[i]] + '">' +
        (upright
          ? '<div class="pr-1 text-center">' + t + '</div>'
          : '<div class="flex h-[159px] items-end justify-center pb-1 ' + pad + '"><span class="rotate-180 leading-[30px] whitespace-nowrap [writing-mode:vertical-rl]">' + t + '</span></div>') +
        '</td>';
    });
    body += '<td class="border-r border-b border-[#d4d4d4] p-0 text-center text-[19px]">акр</td>' + empty + '</tr>';

    // student rows
    rows.forEach((r, i) => {
      const n = i + 2;
      body += '<tr><th class="relative z-1 h-[30px] border-r border-b p-0 ' + (n === 2
        ? 'border-r-[#217346] border-b-[#e1e1e1] bg-[#e1e1e1] font-bold text-[#217346]'
        : 'border-r-[#ababab] border-b-[#e1e1e1] bg-white font-normal text-[#444]') + '">' + n + '</th>';
      body += '<td class="border-r border-b p-0 pl-[3px] text-[19px] whitespace-nowrap ' + fills[r[1][0]] + '">' + r[0] + '</td>';
      for (let c = 0; c < 13; c++) {
        const v = r[2][c] === '.' ? '' : r[2][c];
        const cursor = n === 2 && c === 1
          ? '<span class="absolute -inset-[2px] z-1 border-2 border-[#217346] shadow-[inset_0_0_0_1px_#fff]"><span class="absolute -right-[3px] -bottom-[3px] h-[6px] w-[6px] border-t border-l border-white bg-[#217346]"></span></span>'
          : '';
        body += '<td class="border-r border-b p-0 pr-[3px] text-right text-[19px] ' + fills[r[1][c + 1]] + (cursor ? ' relative z-1' : '') + '">' + v + cursor + '</td>';
      }
      body += empty + '</tr>';
    });
    document.getElementById('rows').innerHTML = body;
  </script>

</body>
</html>
